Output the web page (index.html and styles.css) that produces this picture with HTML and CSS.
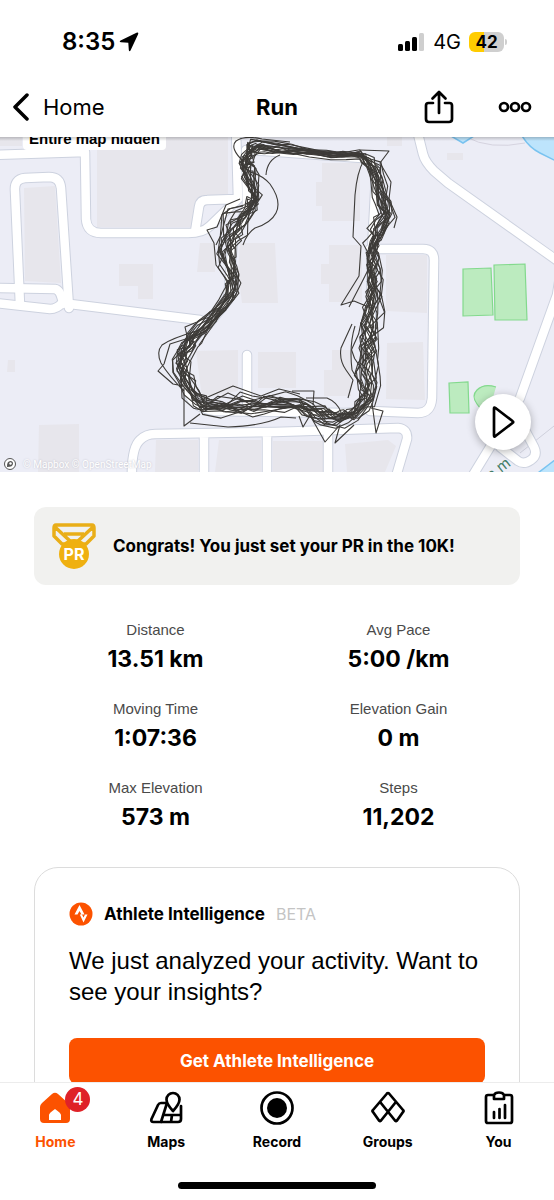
FILE: index.html
```
<!DOCTYPE html>
<html lang="en">
<head>
	<meta charset="utf-8">
	<meta name="viewport" content="width=device-width, initial-scale=1">
	<title>Run</title>
	<link rel="stylesheet" href="styles.css">
</head>

<body>
	<div class="status">
		<div class="clock">
			<span>8:35</span>
			<svg width="20" height="20" viewBox="0 0 20 20"><path d="M17.500.8Q20 0 19 2.500L11.500 18.500Q10.300 20.300 9.800 18L9.300 10.700 2 10.300Q-.3 9.800 1.600 8.500Z"/></svg>
		</div>
		<div class="signal">
			<svg width="28" height="18" viewBox="0 0 28 18">
				<rect x="1" y="11" width="5" height="7" rx="1.500"/>
				<rect x="8" y="8" width="5" height="10" rx="1.500"/>
				<rect x="15" y="4" width="5" height="14" rx="1.500"/>
				<rect x="22" y="0" width="5" height="18" rx="1.500" fill="#cfcfcf"/>
			</svg>
			<span class="network">4G</span>
			<span class="battery">42</span>
		</div>
	</div>

	<header class="navbar">
		<a class="back" href="#home">
			<svg width="18" height="28" viewBox="0 0 18 28"><path d="M15 2 3 14l12 12" class="line"/></svg>
			Home
		</a>
		<h1>Run</h1>
		<div class="actions">
			<button type="button" aria-label="Share">
				<svg width="30" height="34" viewBox="0 0 30 34"><path class="line thin" d="M9 13H4.500Q2 13 2 15.500V29q0 3 3 3h20q3 0 3-3V15.500q0-2.500-2.500-2.500H21M15 23V2.500M8.500 8.500 15 2l6.500 6.500"/></svg>
			</button>
			<button type="button" aria-label="More">
				<svg width="34" height="12" viewBox="0 0 34 12"><g class="line thin"><circle cx="6" cy="6" r="4"/><circle cx="17" cy="6" r="4"/><circle cx="28" cy="6" r="4"/></g></svg>
			</button>
		</div>
	</header>

	<main>
		<section class="map">
			<svg class="map-canvas" viewBox="0 137 554 335" preserveAspectRatio="xMidYMid slice">
				<defs>
					<g id="roads">
						<path d="M-5 155 85 152M85 152 86 219Q87 233 101 233H188Q203 233 210 226L238 199 236 130M195 232 199 207Q200 200 207 200L236 199"/>
						<path d="M20 305 15 191Q14 179 25 178L49 177Q60 177 61 188L69 308"/>
						<path d="M-5 288 55 289Q61 290 63 304M-5 303 50 309Q57 309 62 303L200 320"/>
						<path d="M132 480Q131 448 140 440 146 434 155 434L275 432 398 428Q408 429 407 439L395 480M204 434V480M267 434V480M328 432V480"/>
						<path d="M247 355V402M370 249H423Q434 249 434 260L432 398Q431 413 418 413L370 411"/>
						<path d="M417 130 423 154Q425 162 434 171L448 183 562 264 557 295 520 398 470 480"/>
						<path d="M500 447 518 461Q524 465 531 460 538 455 534 447L526 432"/>
						<path d="M250 150 362 158Q374 160 376 175L372 250 369 400Q366 413 345 413L215 411Q190 408 186 385L185 360Q188 338 208 325L228 300 233 240 247 208 246 150Z"/>
					</g>
				</defs>
				<rect y="130" width="554" height="350" fill="#ecedf6"/>
				<g fill="#e7e6ec">
					<path d="M97 130H228V196L197 198 191 227H97ZM24 188 55 186 61 283 25 281ZM0 130H22V146H0ZM119 264H153V299H138V286H119ZM240 243H275L278 303H242L238 272ZM200 243H215V272H197Z"/>
					<path d="M322 163H360V221H322V206H316V182H322ZM329 245H362V302H329V284H321V264H329ZM386 255H427V313L386 311ZM387 343 423 342 425 400 386 399ZM332 350H351V396H324V370H332Z"/>
					<path d="M196 351 238 350V391L202 398ZM258 352H296V388H258ZM39 425 79 424V472H38ZM156 440H198V472H155ZM219 440H261V472H215ZM273 441H323V472H273ZM345 444 388 440 396 446 385 472H347ZM8 360H15V372H7ZM447 153H463V160H447ZM387 135H402V146H387Z"/>
				</g>
				<path d="M466 137Q490 150 525 143" fill="none" stroke="#d5d3df"/>
				<path d="M554 426 520 453" fill="none" stroke="#cfd0dc"/>
				<g fill="#bde4fc" stroke="#79c3f0" stroke-width="1.500">
					<path d="M521 134Q528 147 540 153L560 163V130ZM451 136 463 143 474 136ZM534 476 560 456V480Z"/>
				</g>
				<g fill="#bcebbf" stroke="#83d98d" stroke-width="1.200">
					<path d="M463 269 491 268 493 315 463 316ZM494 265 525 264 527 320 495 320ZM449 383 468 382 469 413 450 413Z"/>
					<path d="M496 387Q484 383 477 390 471 396 477 404 482 412 490 408"/>
				</g>
				<use href="#roads" class="road-edge"/>
				<use href="#roads" class="road"/>
				<text x="491" y="481" transform="rotate(-38 491 481)" class="map-place">n m</text>
				<g id="laps" class="laps">
					<path d="M244 162Q229 148 236 141 244 135 262 139 L290 142M250 172Q262 175 270 184 282 201 276 213 271 223 255 228 247 233 243 245M280 155Q267 160 266 175"/>
					<path d="M364 160Q357 172 355 195L353 237 361 246 359 276 341 305 354 301 371 308M349 307 362 282 372 262"/>
					<path d="M197 331Q172 338 162 345 156 352 161 363 169 376 184 391M192 337 170 344 164 364 158 371 173 384 183 386M184 388V426L200 414"/>
					<path d="M352 324 341 348Q339 360 346 370L353 380 348 398M355 326Q349 345 352 370L364 391M360 150 389 151 380 163 391 182 389 199 397 217 394 228"/>
					<path d="M311 417 325 442 340 425 335 443 354 425M372 403 376 433 383 411 371 408M190 423 228 427Q262 426 281 417L296 418"/>
					<path d="M201 400 233 386 261 396 279 389 300 394M292 391H314L313 405M306 398H327Q337 402 341 412M200 408 228 393 248 402M299 416 303 427 312 412"/>
					<path d="M240 199 226 205 217 227 207 230 214 243 216 265 230 284M243 206 228 209 221 235 216 245M188 340 185 327 197 322 228 298M199 345 224 310"/>
				</g>
			</svg>
			<div class="hidden-label">Entire map hidden</div>
			<div class="credit">
				<svg width="12" height="12" viewBox="0 0 12 12"><circle cx="6" cy="6" r="5.500" fill="#fff" stroke="#555"/><path d="M3 9Q2.700 3 6.500 3 9 3 9 5.500 9 9 3 9Z" fill="#555"/><circle cx="6.500" cy="5.500" r="1.200" fill="#fff"/></svg>
				<span>© Mapbox © OpenStreetMap</span>
			</div>
			<button type="button" class="play" aria-label="Play">
				<svg width="26" height="34" viewBox="0 0 26 34"><path class="line thin" d="M4 3.500V30.500Q4 32.500 5.500 31L22.500 18Q24 17 22.500 16L5.500 3Q4 2 4 3.500Z"/></svg>
			</button>
		</section>

		<section class="banner">
			<svg width="44" height="46" viewBox="0 0 44 46">
				<g fill="none" stroke="#e9ae18" stroke-width="3.500" stroke-linejoin="round">
					<path d="M4 2H40Q42 2 42 5V13L34 21H10L2 13V5Q2 2 4 2ZM3 4 18 18M41 4 26 18M12 11H32"/>
				</g>
				<circle cx="22" cy="31" r="15" fill="#efb010"/>
				<text x="22" y="37" class="medal-text">PR</text>
			</svg>
			<p>Congrats! You just set your PR in the 10K!</p>
		</section>

		<dl class="stats">
			<div><dt>Distance</dt><dd>13.51 km</dd></div>
			<div><dt>Avg Pace</dt><dd>5:00 /km</dd></div>
			<div><dt>Moving Time</dt><dd>1:07:36</dd></div>
			<div><dt>Elevation Gain</dt><dd>0 m</dd></div>
			<div><dt>Max Elevation</dt><dd>573 m</dd></div>
			<div><dt>Steps</dt><dd>11,202</dd></div>
		</dl>

		<section class="card">
			<div class="card-title">
				<svg width="24" height="24" viewBox="0 0 24 24"><circle cx="12" cy="12" r="11.500" fill="#fc5200"/><path d="M10.500 3 15.500 12.500H12.500L10.500 9 8.500 12.500H5.500ZM10.800 12.500H13L14.500 15.500 16 12.500H18.500L14.500 20.500Z" fill="#fff"/></svg>
				<h2>Athlete Intelligence</h2>
				<span>BETA</span>
			</div>
			<p>We just analyzed your activity. Want to see your insights?</p>
			<button type="button" class="primary">Get Athlete Intelligence</button>
		</section>
	</main>

	<footer>
		<nav class="tabs">
			<a href="#home" class="active">
				<span class="tab-icon">
					<svg width="34" height="34" viewBox="0 0 34 34"><path fill="#fc5200" fill-rule="evenodd" d="M14 3Q17 .5 20 3L30 12Q32 14 32 16V28Q32 32 28 32H6Q2 32 2 28V16Q2 14 4 12ZM11 29H23V24Q23 22 17 18 11 22 11 24Z"/></svg>
					<span class="badge">4</span>
				</span>
				Home
			</a>
			<a href="#maps">
				<span class="tab-icon">
					<svg width="34" height="34" viewBox="0 0 34 34"><path class="line thin" d="M18 12H12Q10 12 9 14L2.500 28Q1.500 31 4.500 31H29Q32 31 32 28V15M18 12 12 31M15 24H32M23 24 22 31"/><path class="line thin map-pin" d="M24 20Q17.500 13 17.500 8.500A6.500 6.500 0 0 1 30.500 8.500Q30.500 13 24 20Z"/></svg>
				</span>
				Maps
			</a>
			<a href="#record">
				<span class="tab-icon">
					<svg width="34" height="34" viewBox="0 0 34 34"><circle class="line thin" cx="17" cy="17" r="15.500"/><circle cx="17" cy="17" r="10"/></svg>
				</span>
				Record
			</a>
			<a href="#groups">
				<span class="tab-icon">
					<svg width="34" height="34" viewBox="0 0 34 34"><path class="line thin" d="M16 2.500Q17 1.500 18 2.500L32 19Q33 20 32 21L26 29.500Q25 30.500 24 29.500L9.500 11.500M16 2.500 2 19Q1 20 2 21L8 29.500Q9 30.500 10 29.500L24.500 11.500"/></svg>
				</span>
				Groups
			</a>
			<a href="#you">
				<span class="tab-icon">
					<svg width="34" height="34" viewBox="0 0 34 34"><path class="line thin" d="M12 4H6Q4 4 4 6V30Q4 32 6 32H28Q30 32 30 30V6Q30 4 28 4H22M12 8V4Q13 1.500 17 1.500T22 4V8ZM12 21V27M17.500 18V27M23 14V27"/></svg>
				</span>
				You
			</a>
		</nav>
		<div class="home-bar"></div>
	</footer>

	<script type="text/javascript">
		// route waypoints: x, y, how far the laps spread around it
		var route = [
			[250,150,8],[262,147,6],[290,150,5],[330,154,5],[361,154,5],[374,167,9],
			[380,192,8],[387,214,8],[379,232,11],[372,245,9],[372,268,10],[373,295,14],
			[370,325,13],[366,348,14],[365,375,15],[366,396,9],[353,414,8],[337,419,10],
			[320,412,10],[297,403,9],[267,403,10],[240,406,13],[205,408,10],[190,392,8],
			[182,370,9],[183,354,8],[194,337,8],[213,318,7],[230,295,7],[234,275,9],
			[229,252,13],[233,227,16],[249,210,8],[256,197,7],[249,176,9],[243,162,10]
		];
		var seed = 11;
		function random() {
			seed = (seed * 16807) % 2147483647;
			return seed / 2147483647 * 2 - 1;
		}
		var laps = document.getElementById("laps");
		for (var lap = 0; lap < 18; lap++) {
			var d = "";
			var side = random();
			for (var i = 0; i < route.length; i++) {
				var a = route[i];
				var b = route[(i + 1) % route.length];
				var length = Math.hypot(b[0] - a[0], b[1] - a[1]);
				var ux = (b[0] - a[0]) / length;
				var uy = (b[1] - a[1]) / length;
				for (var t = 0; t < 1; t += 0.5) {
					// each lap drifts across the road and wobbles a little along it
					side = side * 0.68 + random() * 0.68;
					var across = side * (a[2] + (b[2] - a[2]) * t);
					var along = length * t + random() * 4;
					var x = a[0] + ux * along - uy * across;
					var y = a[1] + uy * along + ux * across;
					d += (d ? "L" : "M") + x.toFixed(1) + " " + y.toFixed(1);
				}
			}
			var path = document.createElementNS("http://www.w3.org/2000/svg", "path");
			path.setAttribute("d", d + "Z");
			laps.appendChild(path);
		}
	</script>
</body>
</html>
```
FILE: styles.css
```
* {
	box-sizing: border-box;
}

body {
	display: flex;
	flex-direction: column;
	height: 100vh;
	margin: 0;
	background: #fff;
	color: #000;
	font-family: Inter, "Liberation Sans", sans-serif;
}

h1, h2, p, dl, dd {
	margin: 0;
}

a {
	color: inherit;
	text-decoration: none;
}

button {
	padding: 0;
	border: none;
	background: none;
	color: inherit;
	font-family: inherit;
	cursor: pointer;
}

svg {
	display: block;
	flex-shrink: 0;
}

.line {
	fill: none;
	stroke: #000;
	stroke-width: 3.5;
	stroke-linecap: round;
	stroke-linejoin: round;
}

.thin {
	stroke-width: 2.7;
}

/* status bar */
.status {
	display: flex;
	justify-content: space-between;
	align-items: center;
	padding: 25px 50px 0 62px;
	height: 58px;
	flex-shrink: 0;
}

.clock, .signal {
	display: flex;
	align-items: center;
	gap: 4px;
}

.clock {
	font-size: 24px;
	font-weight: 600;
}

.signal {
	gap: 8px;
}

.network {
	font-size: 20px;
}

.battery {
	position: relative;
	width: 35px;
	border-radius: 6px;
	background: linear-gradient(to right, #ffcc00 44%, #cfcfcf 44%);
	font-size: 17px;
	font-weight: 700;
	line-height: 20px;
	text-align: center;
}

.battery::after {
	content: "";
	position: absolute;
	top: 7px;
	right: -3px;
	width: 2px;
	height: 6px;
	border-radius: 0 2px 2px 0;
	background: #cfcfcf;
}

/* title bar */
.navbar {
	display: grid;
	grid-template-columns: 1fr auto 1fr;
	align-items: center;
	height: 79px;
	padding: 18px 12px 0;
	flex-shrink: 0;
}

.back {
	display: flex;
	align-items: center;
	gap: 13px;
	font-size: 22px;
}

h1 {
	font-size: 22px;
	font-weight: 700;
}

.actions {
	display: flex;
	justify-content: flex-end;
	align-items: center;
	gap: 44px;
	padding-right: 10px;
}

main {
	flex: 1;
	min-height: 0;
	overflow: hidden;
}

/* map */
.map {
	position: relative;
	height: 335px;
	overflow: hidden;
}

.map::after {
	content: "";
	position: absolute;
	top: 0;
	left: 0;
	right: 0;
	height: 4px;
	background: linear-gradient(rgba(0, 0, 0, 0.2), rgba(0, 0, 0, 0));
}

.map-canvas {
	width: 100%;
	height: 100%;
}

.road, .road-edge {
	fill: none;
	stroke-linejoin: round;
	stroke-linecap: round;
}

.road {
	stroke: #fff;
	stroke-width: 8.5;
}

.road-edge {
	stroke: #cdd2df;
	stroke-width: 10.5;
}

.laps {
	fill: none;
	stroke: #3d3b38;
	stroke-width: 1.1;
	stroke-linejoin: round;
}

.map-place {
	fill: #417c66;
	font-size: 15px;
}

.hidden-label {
	position: absolute;
	top: -10px;
	left: 23px;
	padding: 0 6px;
	border-radius: 4px;
	background: #fff;
	font-family: "Liberation Sans", sans-serif;
	font-size: 15px;
	font-weight: 700;
	line-height: 23px;
}

.credit {
	position: absolute;
	left: 4px;
	bottom: 2px;
	display: flex;
	align-items: center;
	gap: 7px;
	color: #fff;
	font-family: Roboto, sans-serif;
	font-size: 10px;
	text-shadow: 0 0 2px #b9b9c4;
}

.play {
	position: absolute;
	right: 23px;
	bottom: 22px;
	display: flex;
	align-items: center;
	justify-content: center;
	width: 56px;
	height: 56px;
	border-radius: 50%;
	background: #fff;
	box-shadow: 0 2px 8px rgba(0, 0, 0, 0.3);
}

/* record banner */
.banner {
	display: flex;
	align-items: center;
	gap: 17px;
	margin: 35px 34px 0;
	padding: 16px 18px;
	border-radius: 12px;
	background: #f1f1ef;
	font-size: 17px;
	font-weight: 700;
}

.medal-text {
	fill: #fff;
	font-size: 16px;
	font-weight: 700;
	text-anchor: middle;
}

/* numbers */
.stats {
	display: grid;
	grid-template-columns: 1fr 1fr;
	row-gap: 21px;
	padding: 33px 34px 0;
	text-align: center;
}

dt {
	color: #4a4a4a;
	font-family: "Liberation Sans", sans-serif;
	font-size: 15px;
	line-height: 24px;
}

dd {
	font-size: 23px;
	font-weight: 700;
	line-height: 34px;
}

/* athlete intelligence */
.card {
	margin: 33px 34px 0;
	padding: 34px;
	border: 1px solid #dcdcdc;
	border-radius: 24px;
}

.card-title {
	display: flex;
	align-items: center;
	gap: 11px;
}

h2 {
	font-size: 17px;
	font-weight: 700;
	line-height: 24px;
}

.card-title span {
	color: #c4c4c4;
	font-size: 16px;
}

.card p {
	margin: 19px 0 31px;
	font-family: "Liberation Sans", sans-serif;
	font-size: 24px;
	line-height: 31px;
}

.primary {
	width: 100%;
	height: 46px;
	border-radius: 8px;
	background: #fc5200;
	color: #fff;
	font-size: 17px;
	font-weight: 700;
}

/* bottom tabs */
footer {
	flex-shrink: 0;
	height: 118px;
	border-top: 1px solid #ececec;
	background: #fff;
}

.tabs {
	display: grid;
	grid-template-columns: repeat(5, 1fr);
	padding-top: 8px;
}

.tabs a {
	display: flex;
	flex-direction: column;
	align-items: center;
	gap: 7px;
	font-size: 14px;
	font-weight: 700;
	line-height: 20px;
}

.tabs .active {
	color: #fc5200;
}

.tab-icon {
	position: relative;
}

.map-pin {
	fill: #fff;
}

.badge {
	position: absolute;
	top: -4px;
	left: 27px;
	width: 25px;
	border-radius: 50%;
	background: #df2228;
	color: #fff;
	font-size: 17px;
	font-weight: 400;
	line-height: 25px;
	text-align: center;
}

.home-bar {
	width: 198px;
	height: 7px;
	margin: 30px auto 0;
	border-radius: 4px;
	background: #000;
}
```
